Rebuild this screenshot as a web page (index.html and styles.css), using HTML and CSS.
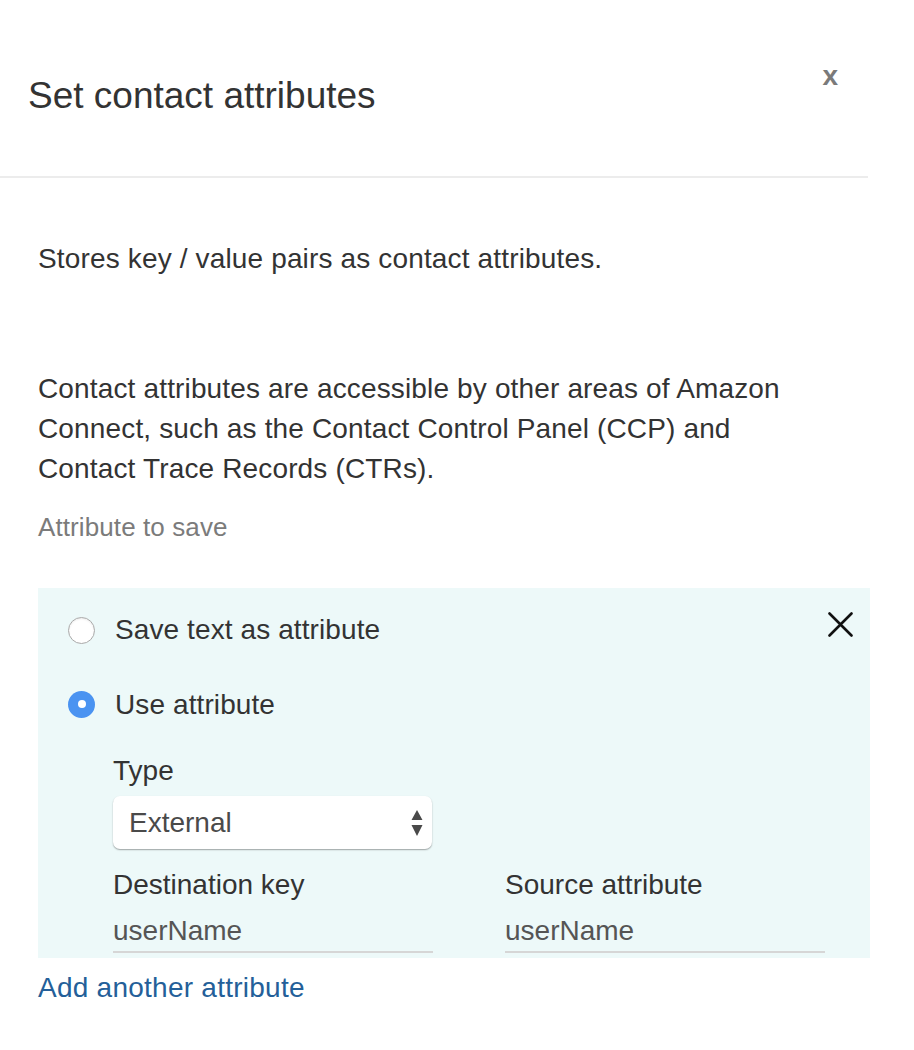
FILE: index.html
```html
<!DOCTYPE html>
<html lang="en">
<head>
<meta charset="utf-8">
<title>Set contact attributes</title>
<link rel="stylesheet" href="styles.css">
</head>
<body>
<div class="modal">
  <div class="header">
    <h1 class="title">Set contact attributes</h1>
    <span class="close">x</span>
  </div>
  <div class="content">
    <p class="text first">Stores key / value pairs as contact attributes.</p>
    <p class="text second">Contact attributes are accessible by other areas of Amazon Connect, such as the Contact Control Panel (CCP) and Contact Trace Records (CTRs).</p>
    <div class="section-label">Attribute to save</div>
    <div class="panel">
      <svg class="remove" width="25" height="25" viewBox="0 0 25 25"><path d="M1.5 1.5 L23.5 23.5 M23.5 1.5 L1.5 23.5" stroke="#111" stroke-width="2.6" stroke-linecap="round"/></svg>
      <div class="radio-row">
        <span class="radio"></span>
        <span class="radio-label">Save text as attribute</span>
      </div>
      <div class="radio-row second-row">
        <span class="radio checked"></span>
        <span class="radio-label">Use attribute</span>
      </div>
      <div class="details">
        <div class="field-label">Type</div>
        <div class="select">
          <span class="select-value">External</span>
          <svg class="arrows" width="12" height="26" viewBox="0 0 12 26"><path d="M6 0 L11.5 10 L0.5 10 Z M6 26 L11.5 15 L0.5 15 Z" fill="#4a4a4a"/></svg>
        </div>
        <div class="fields">
          <div class="field">
            <div class="field-label">Destination key</div>
            <div class="input">userName</div>
          </div>
          <div class="field">
            <div class="field-label">Source attribute</div>
            <div class="input">userName</div>
          </div>
        </div>
      </div>
    </div>
    <a class="add-link" href="#">Add another attribute</a>
  </div>
</div>
</body>
</html>
```

FILE: styles.css
```css
html, body {
  margin: 0;
  padding: 0;
  background: #ffffff;
}
body {
  font-family: "Liberation Sans", Arial, sans-serif;
  color: #333333;
}
.modal {
  width: 914px;
}
.header {
  box-sizing: border-box;
  width: 868px;
  height: 178px;
  padding: 74px 30px 0 28px;
  border-bottom: 2px solid #ececec;
  display: flex;
  justify-content: space-between;
  align-items: flex-start;
}
.title {
  margin: 0;
  font-size: 37px;
  line-height: 44px;
  font-weight: normal;
  color: #333333;
}
.close {
  margin-top: -12px;
  font-size: 28px;
  line-height: 28px;
  font-weight: bold;
  color: #7a7a7a;
}
.content {
  padding: 61px 44px 40px 38px;
}
.text {
  margin: 0;
  font-size: 28px;
  line-height: 40px;
  letter-spacing: 0.15px;
  color: #333333;
  width: 780px;
}
.second {
  margin-top: 90px;
}
.section-label {
  margin-top: 18px;
  font-size: 26px;
  line-height: 40px;
  letter-spacing: 0.1px;
  color: #7b7b7b;
}
.panel {
  position: relative;
  margin-top: 41px;
  width: 832px;
  box-sizing: border-box;
  background: #edf9f9;
  padding: 22px 30px 5px 30px;
}
.remove {
  position: absolute;
  top: 24px;
  right: 17px;
}
.radio-row {
  display: flex;
  align-items: center;
  height: 40px;
  gap: 20px;
}
.second-row {
  margin-top: 34px;
}
.radio {
  box-sizing: border-box;
  width: 27px;
  height: 27px;
  border-radius: 50%;
  background: #ffffff;
  border: 1px solid #a9a9a9;
  box-shadow: inset 0 1px 2px rgba(0,0,0,0.08);
  display: flex;
  align-items: center;
  justify-content: center;
}
.radio.checked {
  background: #4a93f1;
  border: none;
  box-shadow: none;
}
.radio.checked::after {
  content: "";
  width: 8px;
  height: 8px;
  border-radius: 50%;
  background: #ffffff;
}
.radio-label {
  font-size: 28px;
  line-height: 40px;
  letter-spacing: 0.1px;
  color: #333333;
}
.second-row .radio-label {
  position: relative;
  top: 1px;
}
.details {
  padding-left: 45px;
  margin-top: 27px;
}
.field-label {
  font-size: 28px;
  line-height: 40px;
  color: #333333;
}
.select {
  margin-top: 5px;
  width: 319px;
  height: 53px;
  box-sizing: border-box;
  background: #ffffff;
  border-radius: 7px;
  box-shadow: 0 1px 1.5px rgba(0,0,0,0.35);
  padding: 0 9px 0 16px;
  display: flex;
  align-items: center;
  justify-content: space-between;
}
.select-value {
  font-size: 28px;
  line-height: 51px;
  color: #4a4a4a;
}
.fields {
  margin-top: 16px;
  display: flex;
  gap: 72px;
}
.field {
  width: 320px;
}
.input {
  margin-top: 6px;
  font-size: 28px;
  line-height: 40px;
  color: #555555;
  border-bottom: 2px solid #d6d6d6;
}
.add-link {
  display: block;
  margin-top: 10px;
  font-size: 28px;
  line-height: 40px;
  letter-spacing: 0.25px;
  color: #245f99;
  text-decoration: none;
}
```
